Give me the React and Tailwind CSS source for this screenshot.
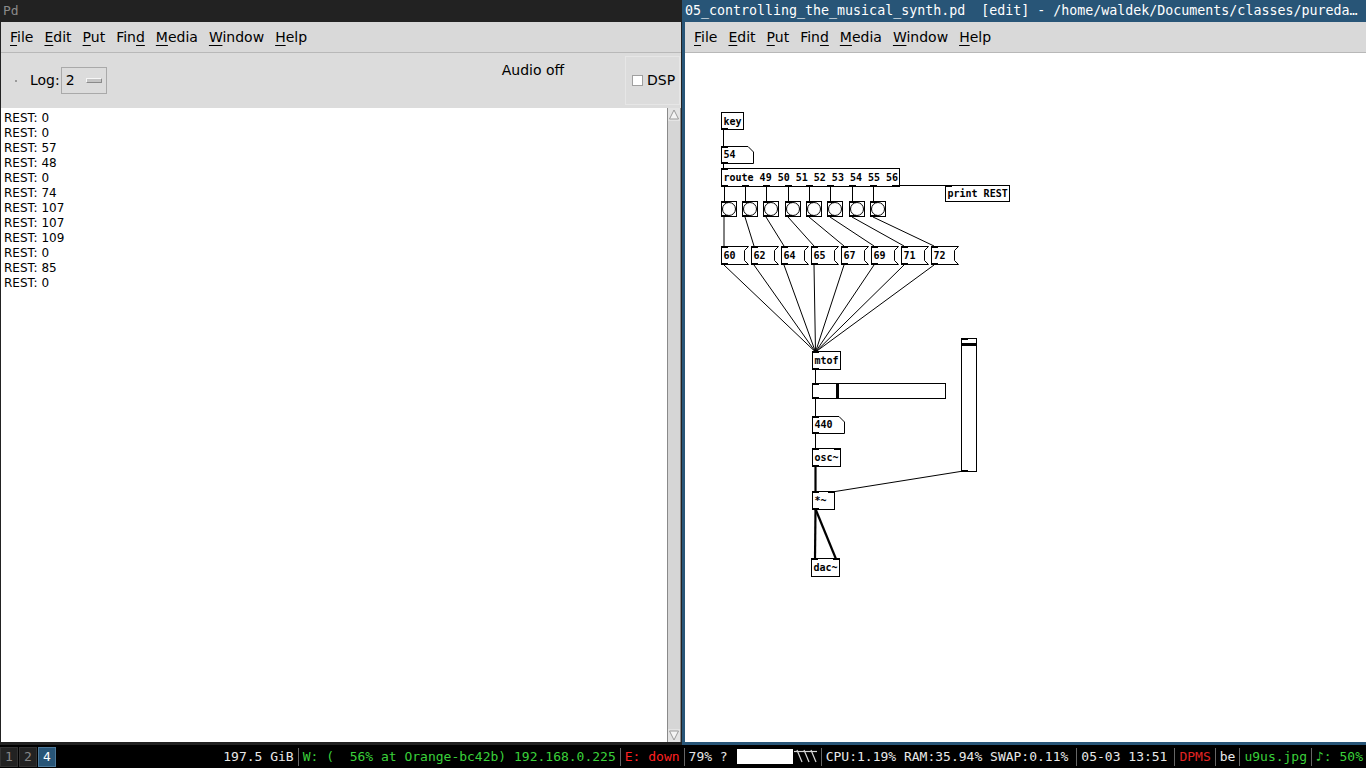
import React from "react";

const MENU = [
  { pre: "", u: "F", post: "ile" },
  { pre: "", u: "E", post: "dit" },
  { pre: "", u: "P", post: "ut" },
  { pre: "Fin", u: "d", post: "" },
  { pre: "", u: "M", post: "edia" },
  { pre: "", u: "W", post: "indow" },
  { pre: "", u: "H", post: "elp" },
];

const LOG = ["0", "0", "57", "48", "0", "74", "107", "107", "109", "0", "85", "0"];

function MenuBar() {
  return (
    <div className="h-[31px] shrink-0 bg-[#d9d9d9] border-b border-[#b8b8b8] flex items-center gap-[11px] pl-[9px] text-[14px] text-black">
      {MENU.map((m) => (
        <span key={m.pre + m.u + m.post}>
          {m.pre}
          <span className="underline underline-offset-[3px]">{m.u}</span>
          {m.post}
        </span>
      ))}
    </div>
  );
}

function Scrollbar() {
  return (
    <div className="w-[14px] shrink-0 bg-[#d6d6d6] border-x border-[#8a8a8a] flex flex-col justify-between">
      <svg width="12" height="13" viewBox="0 0 12 13">
        <rect x="0" y="0" width="12" height="13" fill="#e4e4e4" />
        <path d="M1.5 11 L6 2 L10.5 11 Z" fill="#f4f4f4" stroke="#9a9a9a" strokeWidth="1" />
      </svg>
      <svg width="12" height="13" viewBox="0 0 12 13">
        <rect x="0" y="0" width="12" height="13" fill="#e4e4e4" />
        <path d="M1.5 2 L6 11 L10.5 2 Z" fill="#f4f4f4" stroke="#9a9a9a" strokeWidth="1" />
      </svg>
    </div>
  );
}

function LeftWindow() {
  return (
    <div className="w-[682px] shrink-0 flex flex-col bg-[#222]">
      <div className="h-[22px] shrink-0 flex items-center pl-[3px] text-[13px] text-[#8a8a8a] font-['DejaVu_Sans_Mono',monospace]">
        Pd
      </div>
      <div className="flex-1 flex flex-col mx-[1px] mb-[3px] min-h-0">
        <MenuBar />
        <div className="h-[55px] shrink-0 bg-[#dcdcdc] flex items-center text-[14px] text-black">
          <div className="w-[2px] h-[2px] bg-[#9a9a9a] ml-[14px]" />
          <span className="ml-[13px]">Log:</span>
          <div className="ml-[1px] w-[46px] h-[27px] border border-[#a9a9a9] flex items-center pl-[4px]">
            <span>2</span>
            <div className="ml-[11px] w-[16px] h-[5px] rounded-[1px] bg-[#c4c4c4] border border-t-[#f7f7f7] border-l-[#f7f7f7] border-b-[#8a8a8a] border-r-[#8a8a8a]" />
          </div>
          <span className="ml-[395px] self-start mt-[7px]">Audio off</span>
          <div className="ml-auto mr-[1px] self-stretch my-[3px] w-[55px] border border-[#e6e6e6] flex items-center pl-[6px]">
            <div className="w-[11px] h-[11px] bg-white border border-[#a0a0a0]" />
            <span className="ml-[4px]">DSP</span>
          </div>
        </div>
        <div className="flex-1 flex bg-white min-h-0">
          <div className="flex-1 pl-[3px] pt-[3px] text-[12px] leading-[15px] text-black">
            {LOG.map((v, i) => (
              <div key={i}>REST: {v}</div>
            ))}
          </div>
          <Scrollbar />
        </div>
      </div>
    </div>
  );
}

const FONT = "'DejaVu Sans Mono', monospace";

function Ports({ x, y, w, h, ins, outs }) {
  const r = [];
  if (ins >= 1) r.push(<rect key="i0" x={x} y={y} width="7" height="2" fill="#000" />);
  if (ins >= 2) r.push(<rect key="i1" x={x + w - 7} y={y} width="7" height="2" fill="#000" />);
  outs.forEach((ox, i) =>
    r.push(<rect key={"o" + i} x={ox} y={y + h - 2} width="7" height="2" fill="#000" />)
  );
  return r;
}

function Obj({ x, y, w, h = 17, label, ins = 1, outs }) {
  const o = outs || [x];
  return (
    <g>
      <rect x={x + 0.5} y={y + 0.5} width={w} height={h} fill="#fff" stroke="#000" strokeWidth="1" />
      <text x={x + 2.5} y={y + h / 2 + 4} fontFamily={FONT} fontWeight="bold" fontSize="10" fill="#000">
        {label}
      </text>
      <Ports x={x} y={y} w={w + 1} h={h + 1} ins={ins} outs={o} />
    </g>
  );
}

function NumBox({ x, y, w, h = 17, label }) {
  return (
    <g>
      <path
        d={`M${x + 0.5} ${y + 0.5} H${x + w - 5} L${x + w + 0.5} ${y + 6} V${y + h + 0.5} H${x + 0.5} Z`}
        fill="#fff"
        stroke="#000"
      />
      <text x={x + 2.5} y={y + h / 2 + 3.5} fontFamily={FONT} fontWeight="bold" fontSize="10">
        {label}
      </text>
      <Ports x={x} y={y} w={w + 1} h={h + 1} ins={1} outs={[x]} />
    </g>
  );
}

function Msg({ x, y, label }) {
  const w = 27;
  const h = 18;
  return (
    <g>
      <path
        d={`M${x + 0.5} ${y + 0.5} H${x + w + 0.5} L${x + w - 3.5} ${y + 4.5} V${y + h - 3.5} L${x + w + 0.5} ${y + h + 0.5} H${x + 0.5} Z`}
        fill="#fff"
        stroke="#000"
      />
      <text x={x + 2.5} y={y + h / 2 + 4} fontFamily={FONT} fontWeight="bold" fontSize="10">
        {label}
      </text>
      <Ports x={x} y={y} w={w} h={h + 1} ins={1} outs={[x]} />
    </g>
  );
}

function Bang({ x, y }) {
  return (
    <g>
      <rect x={x + 0.5} y={y + 0.5} width="15" height="15" fill="#fff" stroke="#000" />
      <circle cx={x + 8} cy={y + 8} r="6.5" fill="#fff" stroke="#000" />
      <rect x={x} y={y} width="7" height="2" fill="#000" />
      <rect x={x} y={y + 14} width="7" height="2" fill="#000" />
    </g>
  );
}

const BANGS = [721, 742, 763, 785, 806, 827, 849, 870];
const MSGS = [
  [721, "60"],
  [751, "62"],
  [781, "64"],
  [811, "65"],
  [841, "67"],
  [871, "69"],
  [901, "71"],
  [931, "72"],
];

function PdCanvas() {
  return (
    <svg className="absolute left-0 top-0" width="681" height="689" viewBox="685 53 681 689">
      <g stroke="#000" strokeWidth="1" fill="none">
        <line x1="723.5" y1="129" x2="723.5" y2="147" />
        <line x1="723.5" y1="164" x2="723.5" y2="169" />
        <line x1="896" y1="185.5" x2="949" y2="185.5" />
        {BANGS.map((b) => (
          <line key={"rb" + b} x1={b + 3.5} y1="186" x2={b + 3.5} y2="202" />
        ))}
        {BANGS.map((b, i) => (
          <line key={"bm" + b} x1={b + 3} y1="217" x2={MSGS[i][0] + 3} y2="246" />
        ))}
        {MSGS.map(([m]) => (
          <line key={"mm" + m} x1={m + 3} y1="265" x2="815.5" y2="352" />
        ))}
        <line x1="815.5" y1="369" x2="815.5" y2="384" />
        <line x1="815.5" y1="398" x2="815.5" y2="417" />
        <line x1="815.5" y1="434" x2="815.5" y2="449" />
        <line x1="963.5" y1="471" x2="832" y2="492" />
      </g>
      <g stroke="#000" strokeWidth="2.2" fill="none">
        <line x1="815.5" y1="467" x2="815.5" y2="492" />
        <line x1="815.5" y1="509" x2="815" y2="559" />
        <line x1="815.5" y1="509" x2="836" y2="559" />
      </g>

      <Obj x={721} y={112} w={22} label="key" ins={0} />
      <NumBox x={721} y={146} w={32} label="54" />
      <Obj x={721} y={168} w={178} h={18} label="route 49 50 51 52 53 54 55 56" outs={[721, 742, 763, 785, 806, 827, 849, 870, 892]} />
      <Obj x={945} y={185} w={64} h={16} label="print REST" outs={[]} />
      {BANGS.map((b) => (
        <Bang key={b} x={b} y={201} />
      ))}
      {MSGS.map(([m, l]) => (
        <Msg key={m} x={m} y={246} label={l} />
      ))}
      <Obj x={812} y={351} w={28} h={18} label="mtof" />

      <g>
        <rect x="812.5" y="383.5" width="133" height="15" fill="#fff" stroke="#000" />
        <rect x="836" y="384" width="3" height="14" fill="#000" />
        <rect x="812" y="383" width="7" height="2" fill="#000" />
        <rect x="812" y="397" width="7" height="2" fill="#000" />
      </g>

      <NumBox x={812} y={416} w={32} label="440" />
      <Obj x={812} y={448} w={28} h={18} label="osc~" ins={2} />
      <Obj x={812} y={491} w={22} h={18} label="*~" ins={2} />

      <g>
        <rect x="961.5" y="338.5" width="15" height="133" fill="#fff" stroke="#000" />
        <rect x="962" y="343" width="14" height="3" fill="#000" />
        <rect x="961" y="338" width="7" height="2" fill="#000" />
        <rect x="961" y="470" width="7" height="2" fill="#000" />
      </g>

      <Obj x={811} y={558} w={28} h={18} label="dac~" ins={2} outs={[]} />
    </svg>
  );
}

function RightWindow() {
  return (
    <div className="flex-1 flex flex-col bg-[#285577] min-w-0">
      <div className="h-[22px] shrink-0 flex items-center pl-[3px] text-[13.3px] text-white whitespace-pre overflow-hidden font-['DejaVu_Sans_Mono',monospace]">
        05_controlling_the_musical_synth.pd  [edit] - /home/waldek/Documents/classes/pureda…
      </div>
      <div className="flex-1 flex flex-col pl-[3px] pb-[3px] min-h-0">
        <MenuBar />
        <div className="flex-1 relative bg-white overflow-hidden">
          <PdCanvas />
        </div>
      </div>
    </div>
  );
}

function Hatch() {
  return (
    <svg width="23" height="15" viewBox="0 0 23 15" className="ml-[1px]">
      <g stroke="#d8d8d8" strokeWidth="1.2" fill="none">
        <line x1="0" y1="2.5" x2="23" y2="2.5" />
        <line x1="3" y1="1" x2="8" y2="13" />
        <line x1="10" y1="1" x2="15" y2="13" />
        <line x1="17" y1="1" x2="22" y2="13" />
      </g>
    </svg>
  );
}

function Sep() {
  return <div className="w-px h-[18px] bg-[#666] mx-[4px]" />;
}

function StatusBar() {
  const ws = [
    { n: "1", c: "bg-[#222] border-[#333] text-[#888]" },
    { n: "2", c: "bg-[#222] border-[#333] text-[#888]" },
    { n: "4", c: "bg-[#285577] border-[#4c7899] text-white" },
  ];
  return (
    <div className="h-[23px] shrink-0 bg-black flex items-center text-[13px] font-['DejaVu_Sans_Mono',monospace] whitespace-pre">
      <div className="flex gap-[1px]">
        {ws.map((w) => (
          <div key={w.n} className={"w-[18px] h-[20px] border flex items-center justify-center " + w.c}>
            {w.n}
          </div>
        ))}
      </div>
      <div className="ml-auto flex items-center pr-[3px] text-[#e8e8e8]">
        <span>197.5 GiB</span>
        <Sep />
        <span className="text-[#3ad03a]">W: (  56% at Orange-bc42b) 192.168.0.225</span>
        <Sep />
        <span className="text-[#ff2020]">E: down</span>
        <Sep />
        <span>79% ?</span>
        <div className="ml-[9px] w-[56px] h-[15px] bg-white" />
        <Hatch />
        <Sep />
        <span className="pr-[4px]">CPU:1.19% RAM:35.94% SWAP:0.11%</span>
        <Sep />
        <span className="pr-[3px]">05-03 13:51</span>
        <Sep />
        <span className="text-[#e02424]">DPMS</span>
        <Sep />
        <span>be</span>
        <Sep />
        <span className="text-[#3ad03a]">u9us.jpg</span>
        <Sep />
        <span className="text-[#3ad03a]">♪: 50%</span>
      </div>
    </div>
  );
}

export default function App() {
  return (
    <div className="w-[1366px] h-[768px] bg-black flex flex-col overflow-hidden font-['DejaVu_Sans',sans-serif]">
      <div className="h-[745px] flex">
        <LeftWindow />
        <RightWindow />
      </div>
      <StatusBar />
    </div>
  );
}
